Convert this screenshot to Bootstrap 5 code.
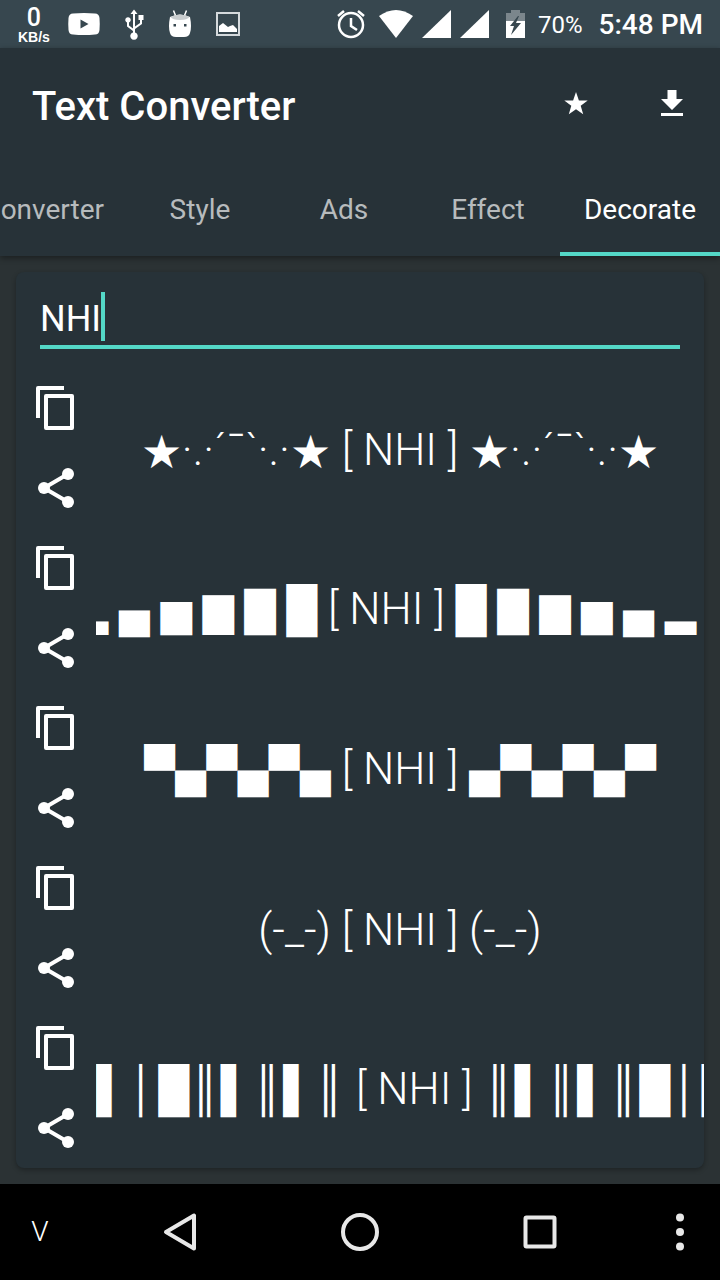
<!DOCTYPE html>
<html lang="en">
<head>
<meta charset="utf-8">
<meta name="viewport" content="width=device-width, initial-scale=1">
<title>Text Converter</title>
<link href="https://cdn.jsdelivr.net/npm/bootstrap@5.3.0/dist/css/bootstrap.min.css" rel="stylesheet">
<style>
  :root { --accent: #54d8c7; --surface: #273238; --status: #37474f; }
  body { background: #2b3234; color: #fff; font-family: Roboto, "Liberation Sans", sans-serif; overflow-x: hidden; }
  svg { display: block; fill: currentColor; flex: none; }
  .btn, .btn:hover { color: #fff; }
  .status-bar { background: var(--status); height: 48px; padding: 0 17px 0 18px; }
  .speed { font: 700 14px/14px "Liberation Sans", sans-serif; margin-right: 18px; }
  .speed b { font: 500 25px/25px Roboto, sans-serif; }
  .battery-text { font-size: 24px; line-height: 48px; margin: 2px 16px 0 12px; }
  .clock { font-size: 28px; font-weight: 500; line-height: 48px; padding-top: 2px; }
  .app-bar { background: var(--surface); box-shadow: 0 2px 6px rgba(0,0,0,.4); }
  .app-title { font-size: 40px; font-weight: 500; line-height: 48px; padding-top: 6px; }
  .title-row { height: 112px; padding: 0 24px 0 32px; }
  .tab-strip { height: 96px; }
  .tab-item { flex: none; min-width: 144px; padding: 8px 24px 0; font-size: 28px; border: 0; background: none; color: #b7bbbd; border-bottom: 4px solid transparent; }
  .tab-item.active { color: #fff; border-color: var(--accent); }
  .panel { background: var(--surface); border-radius: 8px; box-shadow: 0 2px 5px rgba(0,0,0,.3); }
  .entry { padding: 20px 24px 19px; }
  .entry-field { background: none; color: #fff; border: 0; border-bottom: 4px solid var(--accent); border-radius: 0; outline: 0; padding: 2px 0; font-size: 36px; line-height: 49px; height: 57px; }
  .caret { position: absolute; left: 85px; top: 20px; width: 4px; height: 49px; background: var(--accent); }
  .deco-row { height: 160px; padding-left: 16px; }
  .deco { font-size: 44px; font-weight: 300; font-family: Roboto, "Liberation Sans", "DejaVu Sans Condensed", "DejaVu Sans", sans-serif; line-height: 64px; white-space: pre; margin-left: 16px; padding-top: 4px; }
  .deco.blocks { padding-top: 2px; }
  .star { font-family: "DejaVu Sans", sans-serif; font-size: 46px; line-height: 48px; vertical-align: -3px; }
  .level { font-size: 45px; line-height: 48px; }
  .bar-cell { display: inline-block; width: 31px; text-align: center; }
  .nav-keys { background: #000; height: 96px; display: grid; grid-template-columns: 1fr 2fr 2fr 2fr 1fr; align-items: center; }
  .nav-keys .btn { --bs-btn-padding-x: 0; --bs-btn-padding-y: 0; border: 0; width: 48px; justify-self: center; }
  .nav-keys .btn:first-child { justify-self: start; margin-left: 16px; }
  .nav-keys .btn:last-child { justify-self: end; margin-right: 16px; }
  .key-v { font-size: 28px; font-weight: 300; }
</style>
</head>
<body>
<svg width="0" height="0" class="position-absolute" aria-hidden="true">
  <symbol id="copy" viewBox="0 0 24 24"><path d="M16 1H3q-1 0-1 1v15h2V3h12zM20 5H7q-1 0-1 1v16q0 1 1 1h13q1 0 1-1V6q0-1-1-1zm-1 16H8V7h11z"/></symbol>
  <symbol id="share" viewBox="0 0 24 24"><circle cx="18" cy="5" r="3"/><circle cx="6" cy="12" r="3"/><circle cx="18" cy="19" r="3"/><path d="M18 5L6 12l12 7" fill="none" stroke="currentColor" stroke-width="2"/></symbol>
</svg>
<div class="d-flex flex-column min-vh-100">
  <div class="status-bar d-flex align-items-center justify-content-between">
    <div class="d-flex align-items-center">
      <div class="speed d-flex flex-column align-items-center"><b>0</b><span>KB/s</span></div>
      <svg width="32" height="24" viewBox="0 0 32 24"><path fill-rule="evenodd" d="M5 1.500Q16 .5 27 1.500q4 0 4.500 4.500.5 6 0 12-.5 4.500-4.500 4.500-11 1-22 0-4 0-4.500-4.500-.5-6 0-12Q1 1.500 5 1.500zM12.500 7.500v9l8-4.500z"/></svg>
      <svg class="ms-4" width="20" height="32" viewBox="0 0 20 32"><path d="M10 1.500l3.500 4.500H11v12.500l5-3.500v-3h-1.500V7H19.500v5H18v4l-7 5v3.500a3.700 3.700 0 1 1-2 0V23l-6-4.500v-4a2.700 2.700 0 1 1 2 0v3l4 3V6H6.500z"/></svg>
      <svg class="ms-4" width="24" height="30" viewBox="0 0 24 30"><path d="M5.500 1.500l2 5M18.500 1.500l-2 5" stroke="currentColor" stroke-width="1.500" fill="none"/><path fill-rule="evenodd" d="M2 8q10-5 20 0 2 10 0 16-1 4-6 4H8q-5 0-6-4-2-6 0-16zM5.500 15h2.500v2.500H5.500zM16 15h2.500v2.500h-2.500z"/><path d="M2.500 8q9.500-5 19 0-2 3-9.500 3T2.500 8" fill="#c9cdcf"/></svg>
      <svg class="ms-4" width="24" height="24" viewBox="0 0 24 24"><path d="M1 1h22v22H1z" fill="none" stroke="#d5dadd" stroke-width="2"/><path d="M3 20v-6l4-3 5 4 2-1 3-1 4 4v3z"/></svg>
    </div>
    <div class="d-flex align-items-center">
      <svg width="30" height="32" viewBox="0 0 30 32"><circle cx="15" cy="17" r="12" fill="none" stroke="currentColor" stroke-width="2.500"/><path d="M15 10v8l6 4M2 8l6-5M28 8l-6-5" fill="none" stroke="currentColor" stroke-width="2.500"/></svg>
      <svg class="ms-2 me-1" width="44" height="30" viewBox="-4 0 44 30"><path d="M1 7Q18-5 35 7L18 29z"/></svg>
      <svg class="me-2" width="30" height="30" viewBox="2 0 30 30"><path d="M2 29h29V1z"/></svg>
      <svg class="me-3" width="30" height="30" viewBox="0 0 30 30"><path d="M0 29h29V1z"/></svg>
      <svg width="20" height="30" viewBox="0 0 20 30"><path d="M0 4h5V1h9v3h5v8H0z" fill="#7b868c"/><path d="M0 12h19v17H0z"/><path d="M12 7L4 17h4l-3 9 10-12h-5l3-7z" fill="#37474f"/></svg>
      <span class="battery-text">70%</span>
      <span class="clock">5:48 PM</span>
    </div>
  </div>

  <header class="app-bar">
    <div class="title-row d-flex align-items-center justify-content-between">
      <h1 class="app-title m-0">Text Converter</h1>
      <div class="d-flex gap-5">
        <button class="btn p-0 border-0" aria-label="Favorites"><svg width="48" height="48" viewBox="0 0 48 48"><path d="M24 12l2.900 8.400 8.800.1-7 5.300 2.500 8.500L24 29.200l-7.200 5.100 2.500-8.500-7-5.300 8.800-.1z"/></svg></button>
        <button class="btn p-0 border-0" aria-label="Download"><svg width="48" height="48" viewBox="0 0 48 48"><path d="M19.500 10h9v9H35L24 30 13 19h6.500zM13 33h22v3H13z"/></svg></button>
      </div>
    </div>
    <nav class="tab-strip d-flex justify-content-end overflow-hidden" role="tablist">
      <button class="tab-item" role="tab">Converter</button>
      <button class="tab-item" role="tab">Style</button>
      <button class="tab-item" role="tab">Ads</button>
      <button class="tab-item" role="tab">Effect</button>
      <button class="tab-item active" role="tab" aria-selected="true">Decorate</button>
    </nav>
  </header>

  <main class="flex-grow-1 p-3">
    <section class="panel overflow-hidden">
      <div class="entry position-relative">
        <input class="entry-field d-block w-100" type="text" value="NHI" aria-label="Text to decorate">
        <span class="caret"></span>
      </div>
      <div class="deco-row d-flex align-items-center">
        <div class="d-flex flex-column gap-4">
          <button class="btn p-0 border-0" aria-label="Copy"><svg width="48" height="48"><use href="#copy"/></svg></button>
          <button class="btn p-0 border-0 mt-2" aria-label="Share"><svg width="48" height="48"><use href="#share"/></svg></button>
        </div>
        <div class="deco d-flex flex-fill overflow-hidden justify-content-center"><span><span class="star">★</span>·.·´¯`·.·<span class="star">★</span> [ NHI ] <span class="star">★</span>·.·´¯`·.·<span class="star">★</span></span></div>
      </div>
      <div class="deco-row d-flex align-items-center">
        <div class="d-flex flex-column gap-4">
          <button class="btn p-0 border-0" aria-label="Copy"><svg width="48" height="48"><use href="#copy"/></svg></button>
          <button class="btn p-0 border-0 mt-2" aria-label="Share"><svg width="48" height="48"><use href="#share"/></svg></button>
        </div>
        <div class="deco blocks d-flex flex-fill overflow-hidden justify-content-end pe-2"><span><span class="level">▂</span> ▄ <span class="level">▅</span> <span class="level">▆</span> <span class="level">▇</span> █ [ NHI ] █ <span class="level">▇</span> <span class="level">▆</span> <span class="level">▅</span> ▄ <span class="level">▂</span></span></div>
      </div>
      <div class="deco-row d-flex align-items-center">
        <div class="d-flex flex-column gap-4">
          <button class="btn p-0 border-0" aria-label="Copy"><svg width="48" height="48"><use href="#copy"/></svg></button>
          <button class="btn p-0 border-0 mt-2" aria-label="Share"><svg width="48" height="48"><use href="#share"/></svg></button>
        </div>
        <div class="deco blocks d-flex flex-fill overflow-hidden justify-content-center"><span>▀▄▀▄▀▄ [ NHI ] ▄▀▄▀▄▀</span></div>
      </div>
      <div class="deco-row d-flex align-items-center">
        <div class="d-flex flex-column gap-4">
          <button class="btn p-0 border-0" aria-label="Copy"><svg width="48" height="48"><use href="#copy"/></svg></button>
          <button class="btn p-0 border-0 mt-2" aria-label="Share"><svg width="48" height="48"><use href="#share"/></svg></button>
        </div>
        <div class="deco d-flex flex-fill overflow-hidden justify-content-center"><span>(-_-) [ NHI ] (-_-)</span></div>
      </div>
      <div class="deco-row d-flex align-items-center">
        <div class="d-flex flex-column gap-4">
          <button class="btn p-0 border-0" aria-label="Copy"><svg width="48" height="48"><use href="#copy"/></svg></button>
          <button class="btn p-0 border-0 mt-2" aria-label="Share"><svg width="48" height="48"><use href="#share"/></svg></button>
        </div>
        <div class="deco blocks d-flex flex-fill overflow-hidden"><span>▌<span class="bar-cell">│</span>█║▌║▌║ [ NHI ] ║▌║▌║█<span class="bar-cell">│</span>▌</span></div>
      </div>
    </section>
  </main>

  <footer class="nav-keys">
    <button class="btn key-v" aria-label="Hide">V</button>
    <button class="btn" aria-label="Back"><svg width="48" height="48" viewBox="0 0 48 48"><path d="M38 7.500v33L10 24z" fill="none" stroke="#e8e8e8" stroke-width="4" stroke-linejoin="round"/></svg></button>
    <button class="btn" aria-label="Home"><svg width="48" height="48" viewBox="0 0 48 48"><circle cx="24" cy="24" r="17" fill="none" stroke="#e8e8e8" stroke-width="4"/></svg></button>
    <button class="btn" aria-label="Recent"><svg width="48" height="48" viewBox="0 0 48 48"><rect x="9.500" y="9.500" width="29" height="29" rx="1" fill="none" stroke="#e8e8e8" stroke-width="4"/></svg></button>
    <button class="btn" aria-label="More"><svg width="48" height="48" viewBox="0 0 48 48"><g fill="#e8e8e8"><circle cx="24" cy="9.500" r="4"/><circle cx="24" cy="24" r="4"/><circle cx="24" cy="38.500" r="4"/></g></svg></button>
  </footer>
</div>
<script src="https://cdn.jsdelivr.net/npm/bootstrap@5.3.0/dist/js/bootstrap.bundle.min.js"></script>
</body>
</html>
